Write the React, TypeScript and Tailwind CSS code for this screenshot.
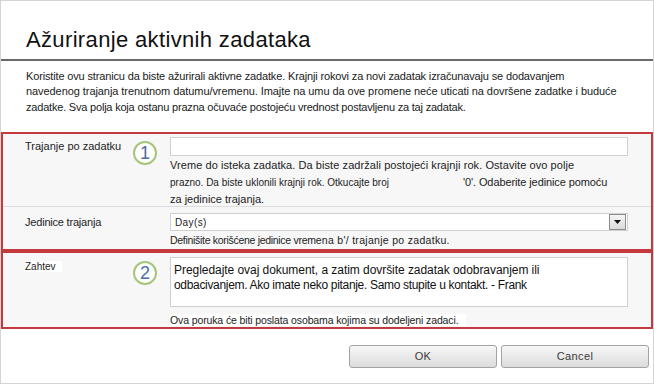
import React from 'react';

function Badge({ n }: { n: string }) {
    return (
        <div className="w-[24px] h-[24px] rounded-full border-2 border-[#a8c47c] bg-white flex items-center justify-center text-[18px] leading-none text-[#4a6da6]">
            {n}
        </div>
    );
}

export default function App() {
    return (
        <div className="w-[654px] h-[384px] bg-white border border-[#d4d4d4] overflow-hidden font-['Liberation_Sans',Arial,sans-serif] text-[#1e1e1e]">
            <h1 className="pl-[25px] pt-[26px] h-[58px] text-[22px] leading-[26px] tracking-[0.35px] text-[#111]">
                Ažuriranje aktivnih zadataka
            </h1>
            <div className="h-[1.5px] bg-[#6a6a6a]" />

            <p className="pl-[25px] pt-[8px] text-[11px] leading-[15.5px] whitespace-nowrap text-[#1a1a1a]">
                <span className="tracking-[-0.15px]">Koristite ovu stranicu da biste ažurirali aktivne zadatke. Krajnji rokovi za novi zadatak izračunavaju se dodavanjem</span>
                <br />
                <span className="tracking-[-0.07px]">navedenog trajanja trenutnom datumu/vremenu. Imajte na umu da ove promene neće uticati na dovršene zadatke i buduće</span>
                <br />
                <span className="tracking-[-0.2px]">zadatke. Sva polja koja ostanu prazna očuvaće postojeću vrednost postavljenu za taj zadatak.</span>
            </p>

            {/* box 1 */}
            <div className="mt-[17px] border-2 border-[#c4393d] bg-[#f7f7f7]">
                <div className="flex h-[72px] pt-[3px]">
                    <div className="w-[167px] shrink-0 flex">
                        <div className="flex-1 pl-[22px] mt-[1px] text-[11px] leading-[16px]">Trajanje po zadatku</div>
                        <div className="mt-[4px] mr-[13px]">
                            <Badge n="1" />
                        </div>
                    </div>
                    <div className="w-[458px]">
                        <div className="h-[19px] border border-[#d0d0d0] bg-white" />
                        <div className="mt-[1px] text-[11px] leading-[16.5px] whitespace-nowrap text-[#222]">
                            <div className="tracking-[0.07px]">Vreme do isteka zadatka. Da biste zadržali postojeći krajnji rok. Ostavite ovo polje</div>
                            <div className="flex items-baseline">
                                <span className="text-[10px] tracking-[0px]">prazno. Da biste uklonili krajnji rok. Otkucajte broj</span>
                                <span className="ml-[74px] tracking-[-0.1px]">'0'. Odaberite jedinice pomoću</span>
                            </div>
                            <div>za jedinice trajanja.</div>
                        </div>
                    </div>
                </div>
                <div className="h-px bg-[#dcdcdc]" />
                <div className="flex h-[42px] pt-[6px]">
                    <div className="w-[167px] shrink-0 pl-[22px] mt-[1px] text-[11px] leading-[16px] tracking-[-0.2px]">Jedinice trajanja</div>
                    <div className="w-[458px]">
                        <div className="h-[18px] border border-[#d0d0d0] bg-white flex items-center justify-between">
                            <span className="pl-[4px] text-[10px] tracking-[0.4px] text-[#222]">Day(s)</span>
                            <div className="w-[17px] h-[16px] mr-px border border-[#8c8c8c] bg-gradient-to-b from-[#f6f6f6] to-[#dadada] flex items-center justify-center">
                                <svg width="7" height="4" viewBox="0 0 7 4">
                                    <path d="M0 0h7L3.5 4z" fill="#111" />
                                </svg>
                            </div>
                        </div>
                        <div className="mt-[2px] text-[10.5px] leading-[14px] whitespace-nowrap text-[#222]">
                            <span className="tracking-[-0.3px]">Definišite korišćene jedinice vrem</span>
                            <span className="tracking-[0.3px]">ena b'/ trajanje po zadatku.</span>
                        </div>
                    </div>
                </div>
            </div>

            {/* box 2 */}
            <div className="border-2 border-[#c4393d] bg-[#f7f7f7]">
                <div className="flex h-[74px] pt-[4px]">
                    <div className="w-[167px] shrink-0 flex">
                        <div className="flex-1 pl-[22px] mt-[3px] text-[10px] leading-[14px]">
                            <span className="bg-white pr-[6px]">Zahtev</span>
                        </div>
                        <div className="mt-[4px] mr-[13px]">
                            <Badge n="2" />
                        </div>
                    </div>
                    <div className="w-[458px]">
                        <div className="h-[50px] border border-[#d0d0d0] bg-white pl-[3px] pt-[5px] text-[12px] leading-[14.5px] whitespace-nowrap text-[#111]">
                            <div className="tracking-[-0.05px]">Pregledajte ovaj dokument, a zatim dovršite zadatak odobravanjem ili</div>
                            <div className="tracking-[-0.32px]">odbacivanjem. Ako imate neko pitanje. Samo stupite u kontakt. - Frank</div>
                        </div>
                        <div className="mt-[6px] text-[10.5px] leading-[14px] whitespace-nowrap text-[#222]">
                            <span className="bg-white pr-[8px] tracking-[-0.12px]">Ova poruka će biti poslata osobama kojima su dodeljeni zadaci.</span>
                        </div>
                    </div>
                </div>
            </div>

            <div className="mt-[16px] flex justify-end gap-[4px] pr-[4px]">
                <button className="w-[148px] h-[23px] rounded-[3px] border border-[#a3a3a3] bg-gradient-to-b from-[#f7f7f7] to-[#dcdcdc] text-[11px] text-[#3a3a3a] tracking-[0.4px]">
                    OK
                </button>
                <button className="w-[148px] h-[23px] rounded-[3px] border border-[#a3a3a3] bg-gradient-to-b from-[#f7f7f7] to-[#dcdcdc] text-[11px] text-[#3a3a3a] tracking-[0.4px]">
                    Cancel
                </button>
            </div>
        </div>
    );
}
